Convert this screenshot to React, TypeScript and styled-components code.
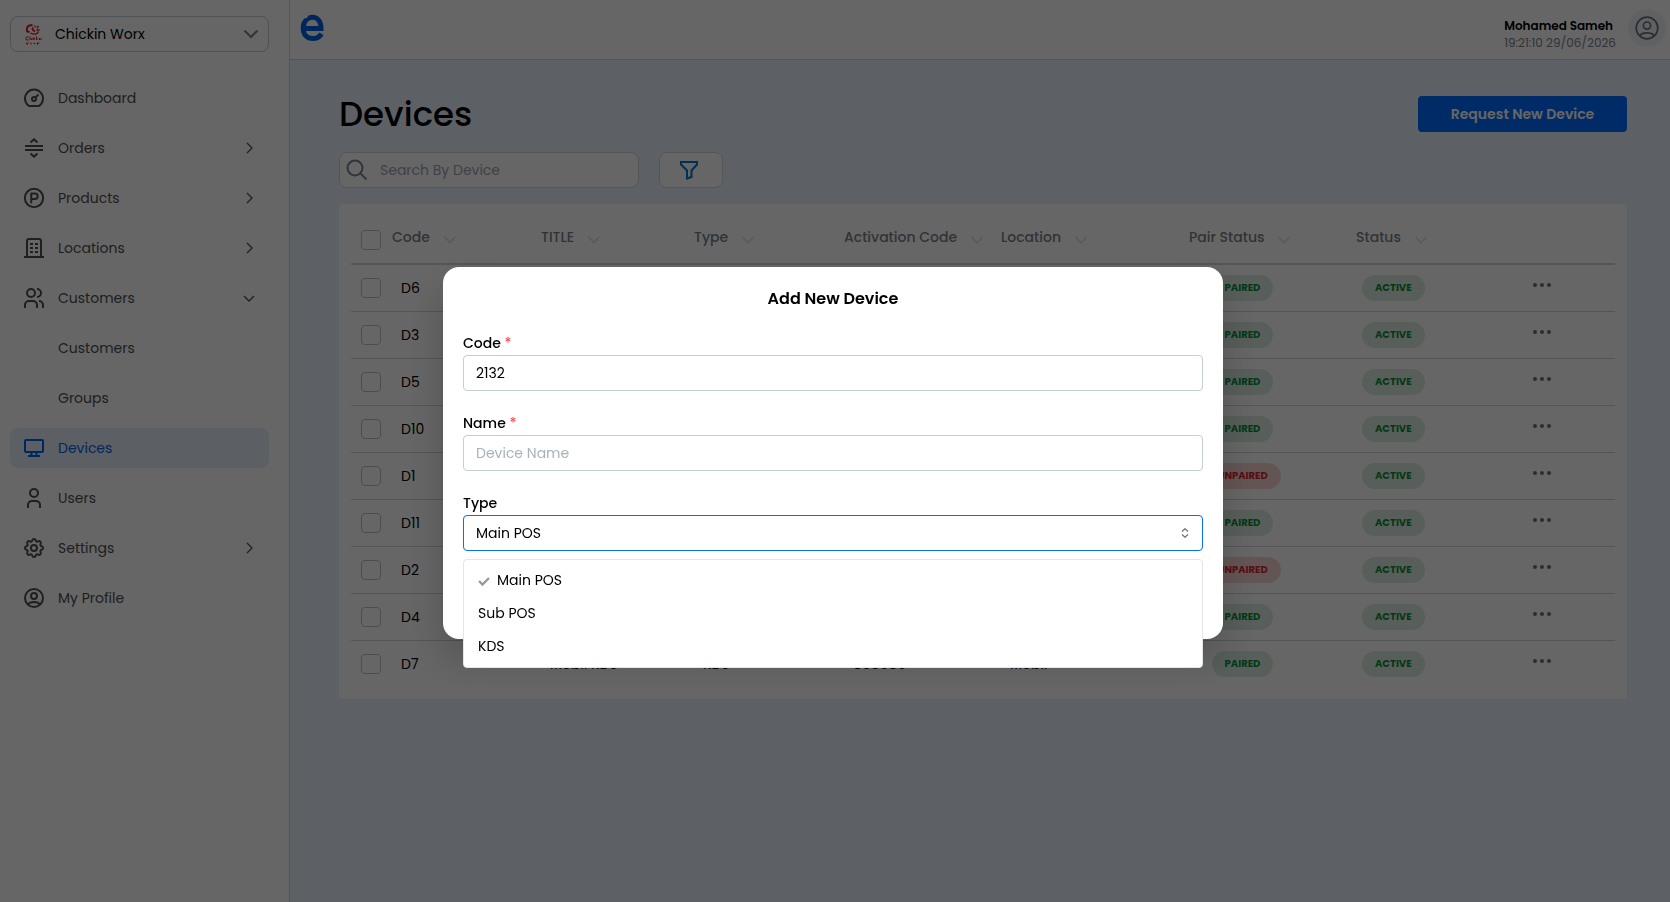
import React from "react";
import styled, { createGlobalStyle } from "styled-components";
import { CircleParking } from "lucide-react";
import { TbSettings } from "react-icons/tb";

const GlobalStyle = createGlobalStyle`
  * { box-sizing: border-box; }
  html, body, #root { height: 100%; }
  body {
    margin: 0;
    background: #e8f0fa;
    color: #000;
    font-family: "Poppins", "Inter", "Liberation Sans", sans-serif;
    font-size: 14px;
  }
  button, input, select { font: inherit; color: inherit; }
`;

const Shell = styled.div`
  display: flex;
  min-height: 100%;
`;

const Sidebar = styled.aside`
  flex: 0 0 290px;
  padding: 16px 20px 0 10px;
  background: #fff;
  border-right: 1px solid #d4d8dd;
`;

const BrandButton = styled.button`
  display: flex;
  align-items: center;
  gap: 12px;
  width: 100%;
  height: 36px;
  padding: 0 9px 0 12px;
  background: #fff;
  border: 1px solid #c5ccd5;
  border-radius: 8px;
  text-align: left;

  span { flex: 1; }
`;

const Nav = styled.nav`
  display: flex;
  flex-direction: column;
  gap: 10px;
  margin-top: 26px;
`;

const NavLink = styled.a<{ $active?: boolean }>`
  display: grid;
  grid-template-columns: 20px 1fr 16px;
  align-items: center;
  column-gap: 14px;
  height: 40px;
  padding: 0 12px 0 14px;
  border-radius: 8px;
  background: ${(p) => (p.$active ? "#e5edfb" : "transparent")};
  color: ${(p) => (p.$active ? "#0064e6" : "#4e4e4e")};
  text-decoration: none;
`;

const NavText = styled.span`
  grid-column: 2;
`;

const Page = styled.div`
  flex: 1;
  min-width: 0;
`;

const TopBar = styled.header`
  display: flex;
  align-items: center;
  justify-content: space-between;
  height: 60px;
  padding: 0 4px 3px 10px;
  background: #fff;
  border-bottom: 1px solid #ccd4d8;
`;

const Account = styled.div`
  display: flex;
  align-items: center;
  gap: 12px;
`;

const AccountText = styled.div`
  padding-top: 11px;
  font-size: 12px;
  line-height: 17px;
  color: #7c828c;

  strong {
    display: block;
    color: #000;
    font-weight: 600;
  }
`;

const Avatar = styled.button`
  display: grid;
  place-items: center;
  width: 38px;
  height: 38px;
  padding: 0;
  border: 0;
  border-radius: 50%;
  background: #f0f3f4;
  color: #6b7280;
`;

const Content = styled.main`
  padding: 36px 43px 36px 49px;
`;

const TitleRow = styled.div`
  display: flex;
  align-items: center;
  justify-content: space-between;
  height: 36px;
`;

const Title = styled.h1`
  margin: 0;
  font-size: 34px;
  font-weight: 500;
  line-height: 36px;
`;

const PrimaryButton = styled.button`
  width: 209px;
  height: 36px;
  border: 0;
  border-radius: 4px;
  background: #006cff;
  color: #fff;
  font-weight: 600;
`;

const Tools = styled.div`
  display: flex;
  gap: 20px;
  margin: 20px 0 16px;
`;

const SearchBox = styled.label`
  display: flex;
  align-items: center;
  gap: 12px;
  width: 300px;
  height: 36px;
  padding: 0 8px 0 6px;
  border: 1px solid #d0d5da;
  border-radius: 8px;
  background: #fff;
  color: #7b8390;
`;

const SearchInput = styled.input`
  flex: 1;
  min-width: 0;
  padding: 0;
  border: 0;
  outline: 0;
  background: transparent;

  &::placeholder { color: #9ca3af; }
`;

const FilterButton = styled.button`
  display: grid;
  place-items: center;
  width: 64px;
  height: 36px;
  padding: 0 4px 0 0;
  border: 1px solid #d0d5da;
  border-radius: 8px;
  background: #fff;
  color: #0078cc;
`;

const Card = styled.section`
  padding: 12px;
  border-radius: 4px;
  background: #fff;
`;

const Table = styled.table`
  width: 100%;
  table-layout: fixed;
  border-collapse: separate;
  border-spacing: 0;
`;

const HeadCell = styled.th`
  height: 49px;
  padding: 0;
  border-bottom: 2px solid #cfdad8;
  color: #7a808a;
  font-weight: 500;
  text-align: left;
`;

const SortButton = styled.button`
  display: flex;
  align-items: center;
  gap: 14px;
  padding: 0 0 4px;
  border: 0;
  background: transparent;
  white-space: nowrap;

  svg { margin-top: 4px; color: #dadee2; }
`;

const Row = styled.tr`
  &:not(:last-child) td { height: 47px; border-bottom: 1px solid #cdd2d5; }
  td { height: 46px; }
`;

const Cell = styled.td<{ $left?: number; $right?: number; $center?: boolean }>`
  padding: 0 ${(p) => p.$right ?? 0}px 0 ${(p) => p.$left ?? 9}px;
  text-align: ${(p) => (p.$center ? "center" : "left")};
`;

const Check = styled.input`
  display: block;
  appearance: none;
  width: 20px;
  height: 20px;
  margin: 0 0 0 10px;
  border: 1px solid #bcc4c8;
  border-radius: 4px;
`;

const Badge = styled.span<{ $bad?: boolean }>`
  display: inline-block;
  padding: 0 13px;
  border-radius: 13px;
  background: ${(p) => (p.$bad ? "#fbd5d5" : "#dbede1")};
  color: ${(p) => (p.$bad ? "#d8262c" : "#0a8f3c")};
  font-size: 10px;
  font-weight: 700;
  line-height: 26px;
  vertical-align: middle;
`;

const MoreButton = styled.button`
  display: block;
  padding: 0 0 12px;
  border: 0;
  background: transparent;
  color: #6b727c;
`;

const Overlay = styled.div`
  position: fixed;
  inset: 0;
  display: grid;
  place-items: center;
  padding: 4px 4px 0 0;
  background: rgba(0, 0, 0, 0.6);
`;

const Dialog = styled.form`
  width: 780px;
  max-width: 96%;
  padding: 20px 20px 88px;
  border-radius: 16px;
  background: #fff;
  box-shadow: 0 20px 40px rgba(0, 0, 0, 0.2);
`;

const DialogTitle = styled.h2`
  margin: 0 0 24px;
  font-size: 16px;
  font-weight: 600;
  line-height: 24px;
  text-align: center;
`;

const Field = styled.div`
  position: relative;

  & + & { margin-top: 24px; }

  label {
    display: block;
    height: 20px;
    font-weight: 500;
    line-height: 16px;
  }
`;

const Required = styled.span`
  color: #ff4d4f;
`;

const TextInput = styled.input`
  display: block;
  width: 100%;
  height: 36px;
  padding: 0 12px;
  border: 1px solid #c5ced6;
  border-radius: 4px;
  outline: 0;
  background: #fff;

  &::placeholder { color: #a8b2bd; }
`;

const SelectWrap = styled.div`
  display: grid;
  align-items: center;

  select, svg { grid-area: 1 / 1; }

  svg {
    justify-self: end;
    margin-right: 13px;
    color: #6b7280;
    pointer-events: none;
  }
`;

const Select = styled.select`
  appearance: none;
  width: 100%;
  height: 36px;
  padding: 0 12px;
  border: 1px solid #0a6cf5;
  border-radius: 4px;
  outline: 0;
  background: #fff;
`;

const Menu = styled.ul`
  position: absolute;
  top: 100%;
  left: 0;
  right: 0;
  margin: 8px 0 0;
  padding: 4px;
  border: 1px solid #e3e6e8;
  border-radius: 4px;
  background: #fff;
  list-style: none;
`;

const Option = styled.li`
  display: flex;
  align-items: center;
  gap: 7px;
  height: 33px;
  padding: 0 10px;

  svg { color: #9a9a9a; }
`;

type StrokeProps = { size?: number; box?: number; width?: number; children: React.ReactNode };

const Stroke = ({ size = 20, box = 20, width = 2, children }: StrokeProps) => (
  <svg width={size} height={size} viewBox={`0 0 ${box} ${box}`} fill="none" stroke="currentColor" strokeWidth={width} aria-hidden>
    {children}
  </svg>
);

const profileShape = (
  <>
    <circle cx="10" cy="10" r="9" />
    <circle cx="10" cy="8" r="3" />
    <path d="M4.200 16.400C5.200 14.600 7 14 10 14s4.800.6 5.800 2.400" />
  </>
);

const icons: Record<string, React.ReactNode> = {
  dashboard: (
    <Stroke>
      <path d="M5 18a9 9 0 1 1 10 0z" strokeLinejoin="round" />
      <circle cx="10" cy="11" r="2" />
      <path d="M11.500 9.500 14.500 6.500" />
    </Stroke>
  ),
  orders: (
    <Stroke>
      <path d="M1 8h18M1 12h18M6.500 4.500 10 1.400l3.500 3.100M6.500 15.500 10 18.600l3.500-3.100" />
    </Stroke>
  ),
  products: <CircleParking size={22} strokeWidth={2.2} style={{ margin: -1 }} />,
  locations: (
    <Stroke>
      <path d="M0 19h20M3 19V3a2 2 0 0 1 2-2h10a2 2 0 0 1 2 2v16" />
      <path d="M6 6h3M11 6h3M6 10h3M11 10h3M6 14h3M11 14h3" />
    </Stroke>
  ),
  customers: (
    <Stroke>
      <circle cx="7" cy="5" r="4" />
      <path d="M13 1a4 4 0 0 1 0 8M1 20v-3a4 4 0 0 1 4-4h4a4 4 0 0 1 4 4v3M15 13a4 4 0 0 1 4 4v3" />
    </Stroke>
  ),
  devices: (
    <Stroke>
      <rect x="1" y="2" width="18" height="12" rx="1" />
      <path d="M7.500 14v4M12.500 14v4M4 18h12" />
    </Stroke>
  ),
  users: (
    <Stroke>
      <circle cx="10" cy="5" r="4" />
      <path d="M4 20v-3a4 4 0 0 1 4-4h4a4 4 0 0 1 4 4v3" />
    </Stroke>
  ),
  settings: <TbSettings size={24} style={{ margin: -2 }} />,
  profile: <Stroke>{profileShape}</Stroke>,
};

const ArrowRight = () => (
  <Stroke size={16} box={16} width={1.3}><path d="m6 3 5 5-5 5" /></Stroke>
);
const ArrowDown = () => (
  <Stroke size={16} box={16} width={1.3}><path d="m3 6 5 5 5-5" /></Stroke>
);

const Logo = () => (
  <svg width="25" height="28" viewBox="0 0 25 28" fill="none" aria-label="e">
    <path d="M3.200 14.500H21C21 7.500 17.500 3.200 12.500 3.200S3.200 7.500 3.200 14c0 6.800 4 10.600 9.500 10.600 4 0 6.800-1.700 8.800-4.800" stroke="#0062e6" strokeWidth="5" />
    <path d="M0 0h9L7 4 4 4.500 0 10z" fill="#fff" />
  </svg>
);

const BrandMark = () => (
  <svg width="20" height="22" viewBox="0 0 20 22" fill="none" stroke="#d9142b" aria-hidden>
    <path d="M6.500 2.500C4 3 3.500 5 4 8.500l2.500.5M6.500 2.500l3-.5M10 4.500c-1.500 2 .5 3 2 4" strokeWidth="1.800" />
    <path d="M7.500 10c3 2 7 1.500 8-1.500M12 2.500v2M15.500 3 14 5M13.500 7h3" strokeWidth="1.300" />
    <path d="M5.500 14H3.500q-1.500 1.500 0 3h2M7 13.500V17M8.500 15.500V17M10 14.500V17M12 15h-1v2M13.500 13.500V17l1.500-1.500M16.500 15v2M18 15v2" strokeWidth="1" />
    <path d="M3.500 19.500l.5 2 1.500-2M8 19.500v2M10.500 20.500h2M14.500 19.500v2l1.500-2" strokeWidth="1" />
  </svg>
);

type NavItem = { label: string; icon?: string; arrow?: "right" | "down"; active?: boolean };

const nav: NavItem[] = [
  { label: "Dashboard", icon: "dashboard" },
  { label: "Orders", icon: "orders", arrow: "right" },
  { label: "Products", icon: "products", arrow: "right" },
  { label: "Locations", icon: "locations", arrow: "right" },
  { label: "Customers", icon: "customers", arrow: "down" },
  { label: "Customers" },
  { label: "Groups" },
  { label: "Devices", icon: "devices", active: true },
  { label: "Users", icon: "users" },
  { label: "Settings", icon: "settings", arrow: "right" },
  { label: "My Profile", icon: "profile" },
];

const columns = [
  { label: "Code", width: 149 },
  { label: "TITLE", width: 153 },
  { label: "Type", width: 150 },
  { label: "Activation Code", width: 157 },
  { label: "Location", width: 188 },
  { label: "Pair Status", width: 167 },
  { label: "Status", width: 177 },
];

type Device = { code: string; paired: boolean; title?: string; type?: string; activation?: string; location?: string };

const devices: Device[] = [
  { code: "D6", paired: true },
  { code: "D3", paired: true },
  { code: "D5", paired: true },
  { code: "D10", paired: true },
  { code: "D1", paired: false },
  { code: "D11", paired: true },
  { code: "D2", paired: false },
  { code: "D4", paired: true },
  { code: "D7", paired: true, title: "Mobil KDS", type: "KDS", activation: "868686", location: "Mobil" },
];

export default function App() {
  return (
    <>
      <GlobalStyle />
      <Shell>
        <Sidebar>
          <BrandButton type="button">
            <BrandMark />
            <span>Chickin Worx</span>
            <Stroke size={16} box={16} width={2}><path d="m1.500 4.500 6.500 6.500 6.500-6.500" stroke="#7b8390" /></Stroke>
          </BrandButton>
          <Nav>
            {nav.map((item, i) => (
              <NavLink key={i} href="#" $active={item.active}>
                {item.icon && icons[item.icon]}
                <NavText>{item.label}</NavText>
                {item.arrow === "right" && <ArrowRight />}
                {item.arrow === "down" && <ArrowDown />}
              </NavLink>
            ))}
          </Nav>
        </Sidebar>
        <Page>
          <TopBar>
            <Logo />
            <Account>
              <AccountText>
                <strong>Mohamed Sameh</strong>
                19:21:10 29/06/2026
              </AccountText>
              <Avatar type="button" aria-label="Account">
                <Stroke size={24} width={1.4}>{profileShape}</Stroke>
              </Avatar>
            </Account>
          </TopBar>
          <Content>
            <TitleRow>
              <Title>Devices</Title>
              <PrimaryButton type="button">Request New Device</PrimaryButton>
            </TitleRow>
            <Tools>
              <SearchBox>
                <Stroke size={22} box={22} width={2}>
                  <circle cx="9" cy="9" r="7.500" />
                  <path d="m14.500 14.500 6 6" />
                </Stroke>
                <SearchInput type="search" placeholder="Search By Device" aria-label="Search By Device" />
              </SearchBox>
              <FilterButton type="button" aria-label="Filter">
                <Stroke width={2}>
                  <path d="M2 2h16v2.500l-5.500 6v6.500L8 18.500v-8L2 4.500z" />
                </Stroke>
              </FilterButton>
            </Tools>
            <Card>
              <Table>
                <colgroup>
                  <col style={{ width: 41 }} />
                  {columns.map((c) => <col key={c.label} style={{ width: c.width }} />)}
                  <col style={{ width: 82 }} />
                </colgroup>
                <thead>
                  <tr>
                    <HeadCell><Check type="checkbox" aria-label="Select all devices" /></HeadCell>
                    {columns.map((c) => (
                      <HeadCell key={c.label}>
                        <SortButton type="button">
                          {c.label}
                          <svg width="12" height="8" viewBox="0 0 12 8" fill="none" stroke="currentColor" strokeWidth="1.500" aria-hidden>
                            <path d="m.6 1 5.400 5.600L11.400 1" />
                          </svg>
                        </SortButton>
                      </HeadCell>
                    ))}
                    <HeadCell />
                  </tr>
                </thead>
                <tbody>
                  {devices.map((d) => (
                    <Row key={d.code}>
                      <Cell $left={0}><Check type="checkbox" aria-label={`Select ${d.code}`} /></Cell>
                      <Cell>{d.code}</Cell>
                      <Cell>{d.title}</Cell>
                      <Cell>{d.type}</Cell>
                      <Cell>{d.activation}</Cell>
                      <Cell>{d.location}</Cell>
                      <Cell $left={0} $right={60} $center>
                        <Badge $bad={!d.paired}>{d.paired ? "PAIRED" : "UNPAIRED"}</Badge>
                      </Cell>
                      <Cell $left={6}><Badge>ACTIVE</Badge></Cell>
                      <Cell $left={0}>
                        <MoreButton type="button" aria-label={`Actions for ${d.code}`}>
                          <svg width="18" height="4" viewBox="0 0 18 4" fill="currentColor" aria-hidden>
                            <circle cx="2" cy="2" r="2" />
                            <circle cx="9" cy="2" r="2" />
                            <circle cx="16" cy="2" r="2" />
                          </svg>
                        </MoreButton>
                      </Cell>
                    </Row>
                  ))}
                </tbody>
              </Table>
            </Card>
          </Content>
        </Page>
      </Shell>
      <Overlay>
        <Dialog role="dialog" aria-labelledby="dialog-title">
          <DialogTitle id="dialog-title">Add New Device</DialogTitle>
          <Field>
            <label htmlFor="code">Code <Required>*</Required></label>
            <TextInput id="code" defaultValue="2132" />
          </Field>
          <Field>
            <label htmlFor="name">Name <Required>*</Required></label>
            <TextInput id="name" placeholder="Device Name" />
          </Field>
          <Field>
            <label htmlFor="type">Type</label>
            <SelectWrap>
              <Select id="type" defaultValue="Main POS">
                <option>Main POS</option>
                <option>Sub POS</option>
                <option>KDS</option>
              </Select>
              <Stroke size={10} box={10} width={1.2}>
                <path d="M2 3.500 5 .7l3 2.800M2 6.500l3 2.800 3-2.800" />
              </Stroke>
            </SelectWrap>
            <Menu role="listbox" aria-label="Type">
              <Option role="option" aria-selected="true">
                <Stroke size={12} box={12} width={2.4}><path d="m1 6 3.500 3.500L11 3" /></Stroke>
                Main POS
              </Option>
              <Option role="option" aria-selected="false">Sub POS</Option>
              <Option role="option" aria-selected="false">KDS</Option>
            </Menu>
          </Field>
        </Dialog>
      </Overlay>
    </>
  );
}
